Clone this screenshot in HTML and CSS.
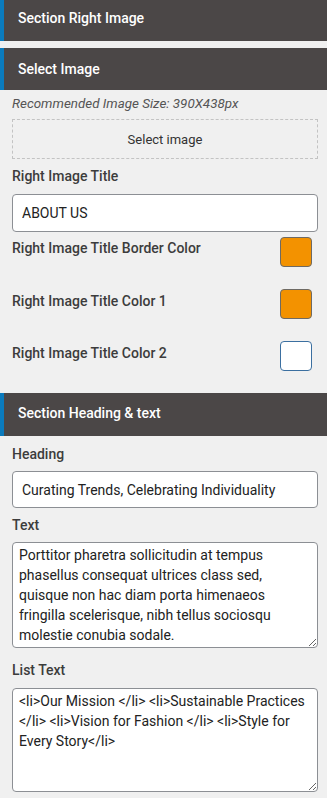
FILE: index.html
```html
<!DOCTYPE html>
<html>
<head>
<meta charset="utf-8">
<link rel="stylesheet" href="styles.css">
</head>
<body>
<div class="panel">
  <div class="sec-head first">Section Right Image</div>
  <div class="sec-head">Select Image</div>
  <div class="sec-body">
    <p class="hint">Recommended Image Size: 390X438px</p>
    <div class="picker">Select image</div>
    <label class="lbl">Right Image Title</label>
    <input class="field" type="text" value="ABOUT US">
    <div class="color-row top">
      <span class="lbl">Right Image Title Border Color</span>
      <span class="swatch orange"></span>
    </div>
    <div class="color-row">
      <span class="lbl">Right Image Title Color 1</span>
      <span class="swatch orange"></span>
    </div>
    <div class="color-row">
      <span class="lbl">Right Image Title Color 2</span>
      <span class="swatch white"></span>
    </div>
  </div>
  <div class="sec-head flush">Section Heading &amp; text</div>
  <div class="sec-body second">
    <label class="lbl">Heading</label>
    <input class="field short" type="text" value="Curating Trends, Celebrating Individuality">
    <label class="lbl">Text</label>
    <textarea class="area">Porttitor pharetra sollicitudin at tempus phasellus consequat ultrices class sed, quisque non hac diam porta himenaeos fringilla scelerisque, nibh tellus sociosqu molestie conubia sodale.</textarea>
    <label class="lbl after-area">List Text</label>
    <textarea class="area list">&lt;li&gt;Our Mission &lt;/li&gt; &lt;li&gt;Sustainable Practices &lt;/li&gt; &lt;li&gt;Vision for Fashion &lt;/li&gt; &lt;li&gt;Style for Every Story&lt;/li&gt;</textarea>
  </div>
</div>
</body>
</html>
```

FILE: styles.css
```css
* { box-sizing: border-box; }
html, body { margin: 0; padding: 0; }
body {
  background: #f0f0f0;
  font-family: Roboto, "Liberation Sans", sans-serif;
  color: #3c3c3c;
  width: 327px;
  overflow: hidden;
}
.panel { display: flex; flex-direction: column; }
.sec-head {
  height: 42px;
  background: #4b4747;
  color: #ffffff;
  font-size: 14px;
  font-weight: 500;
  line-height: 42px;
  border-left: 4px solid #0b7bbd;
  padding-left: 14px;
  margin-top: 7px;
}
.sec-head.first { margin-top: 0; height: 41px; line-height: 37px; }
.sec-head.flush { margin-top: 0; height: 43px; line-height: 40px; }
.sec-body {
  display: flex;
  flex-direction: column;
  padding: 0 9px 0 12px;
}
.hint {
  margin: 6px 0 0;
  font-size: 13.4px;
  font-style: italic;
  color: #555;
  line-height: 15px;
}
.picker {
  margin-top: 8px;
  height: 40px;
  border: 1px dashed #c3c3c3;
  display: flex;
  align-items: center;
  justify-content: center;
  font-size: 13px;
  color: #333;
}
.lbl {
  font-size: 14px;
  font-weight: 500;
  color: #3c3c3c;
  line-height: 16px;
}
.sec-body > .lbl { margin-top: 9px; }
.field {
  margin-top: 10px;
  height: 38px;
  width: 306px;
  border: 1px solid #8c8f94;
  border-radius: 4px;
  background: #fff;
  font-family: Roboto, "Liberation Sans", sans-serif;
  font-size: 14px;
  color: #222;
  padding: 0 9px;
  outline: none;
}
.field.short { height: 37px; margin-top: 9px; }
.color-row {
  display: flex;
  justify-content: space-between;
  align-items: flex-start;
  padding-right: 6px;
  height: 52px;
}
.color-row.top { margin-top: 5px; }
.color-row .lbl { margin-top: 4px; }
.color-row.top .lbl { margin-top: 3px; }
.swatch {
  width: 32px;
  height: 30px;
  border-radius: 4px;
  border: 1px solid #6e6a64;
}
.swatch.orange { background: #f39200; }
.swatch.white { background: #fff; border-color: #3b6fa0; }
.sec-body.second > .lbl:first-child { margin-top: 10px; }
.area {
  margin-top: 9px;
  width: 306px;
  height: 106px;
  border: 1px solid #8c8f94;
  border-radius: 4px;
  background: #fff;
  font-family: Roboto, "Liberation Sans", sans-serif;
  font-size: 14px;
  line-height: 20px;
  color: #222;
  padding: 2px 6px;
  resize: vertical;
  outline: none;
  overflow: hidden;
}
.sec-body > .lbl.after-area { margin-top: 14px; }
.area.list { height: 104px; margin-top: 10px; }
```
